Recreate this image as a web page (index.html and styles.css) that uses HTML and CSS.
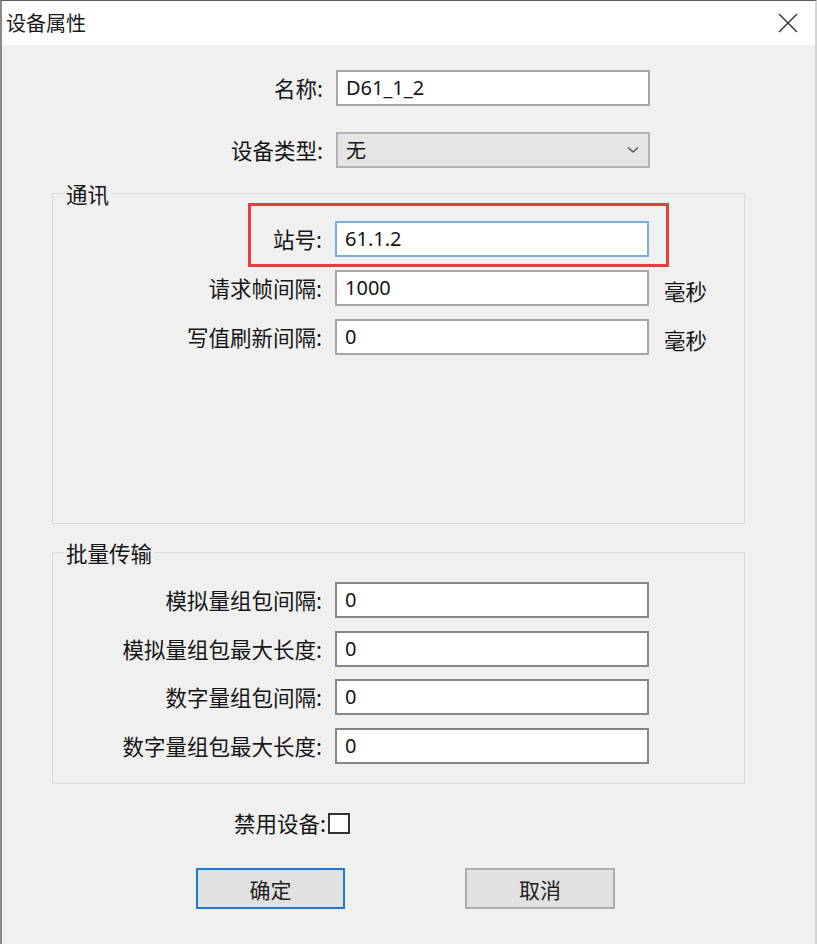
FILE: index.html
```html
<!DOCTYPE html>
<html lang="zh-CN">
<head>
<meta charset="utf-8">
<title>设备属性</title>
<link rel="stylesheet" href="styles.css">
</head>
<body>
<div class="dialog">
  <div class="titlebar">
    <span class="title">设备属性</span>
    <span class="close" aria-label="关闭">
      <svg width="20" height="20" viewBox="0 0 20 20"><path d="M1 1 L19 19 M19 1 L1 19" stroke="#3a3a3a" stroke-width="1.5" fill="none"/></svg>
    </span>
  </div>
  <div class="content">
    <div class="row top">
      <label class="lbl">名称:</label>
      <div class="input">D61_1_2</div>
    </div>
    <div class="row top row-select">
      <label class="lbl">设备类型:</label>
      <div class="select"><span>无</span>
        <svg class="chev" width="12" height="8" viewBox="0 0 12 8"><path d="M1 1.5 L6 6 L11 1.5" stroke="#555" stroke-width="1.6" fill="none"/></svg>
      </div>
    </div>

    <div class="group group-comm">
      <div class="group-title">通讯</div>
      <div class="row in-group first highlight">
        <label class="lbl">站号:</label>
        <div class="input focused">61.1.2</div>
        <span class="mark"></span>
      </div>
      <div class="row in-group">
        <label class="lbl">请求帧间隔:</label>
        <div class="input">1000</div>
        <span class="unit">毫秒</span>
      </div>
      <div class="row in-group">
        <label class="lbl">写值刷新间隔:</label>
        <div class="input">0</div>
        <span class="unit">毫秒</span>
      </div>
    </div>

    <div class="group group-batch">
      <div class="group-title">批量传输</div>
      <div class="row in-group first">
        <label class="lbl">模拟量组包间隔:</label>
        <div class="input dark">0</div>
      </div>
      <div class="row in-group">
        <label class="lbl">模拟量组包最大长度:</label>
        <div class="input dark">0</div>
      </div>
      <div class="row in-group">
        <label class="lbl">数字量组包间隔:</label>
        <div class="input dark">0</div>
      </div>
      <div class="row in-group">
        <label class="lbl">数字量组包最大长度:</label>
        <div class="input dark">0</div>
      </div>
    </div>

    <div class="check-row">
      <label class="lbl">禁用设备:</label>
      <span class="checkbox"></span>
    </div>

    <div class="buttons">
      <button class="btn default">确定</button>
      <button class="btn">取消</button>
    </div>
  </div>
</div>
</body>
</html>
```

FILE: styles.css
```css
* { box-sizing: border-box; }
html, body { margin: 0; padding: 0; }
body {
  width: 817px;
  height: 944px;
  overflow: hidden;
  background: #f0f0f0;
  font-family: "Noto Sans", "Noto Sans CJK SC", sans-serif;
  font-size: 21.5px;
  color: #141414;
}
.dialog {
  width: 817px;
  height: 944px;
  background: #f0f0f0;
  border-left: 2px solid #8a8a8a;
  border-right: 2px solid #d4d4d4;
  border-top: 1px solid #5c5c5c;
}
.titlebar {
  height: 44px;
  background: #fff;
  display: flex;
  align-items: center;
  justify-content: space-between;
  padding: 0 17px 0 4px;
}
.title {
  font-family: "Noto Sans CJK SC", sans-serif;
  font-size: 20px;
  color: #1a1a1a;
  line-height: 24px;
}
.close { display: flex; width: 20px; height: 20px; }

.content { padding-top: 25px; }

.row {
  display: grid;
  grid-template-columns: var(--lw) 314px auto;
  column-gap: 13px;
  align-items: center;
  position: relative;
}
.row.top { --lw: 321px; }
.row.in-group { --lw: 269px; margin-top: 13px; }
.row-select { margin-top: 26px; }

.lbl {
  text-align: right;
  font-family: "Noto Sans CJK SC", sans-serif;
  line-height: 24px;
  white-space: nowrap;
}
.input, .select {
  height: 36px;
  border: 2px solid #a6a6a6;
  background: #fff;
  padding: 0 8px;
  display: flex;
  align-items: center;
  font-size: 20px;
  line-height: 24px;
}
.input.focused { border-color: #78aee0; }
.input.dark { border-color: #868686; }
.select {
  background: #e5e5e5;
  border-color: #b3b3b3;
  justify-content: space-between;
  font-family: "Noto Sans CJK SC", sans-serif;
  padding-right: 9px;
}
.unit {
  margin-left: 2px;
  padding-top: 6px;
  font-family: "Noto Sans CJK SC", sans-serif;
  line-height: 24px;
}

.group {
  margin-left: 50px;
  width: 693px;
  border: 1px solid #dadada;
}
.group-comm { margin-top: 25px; height: 331px; }
.group-batch { margin-top: 28px; height: 232px; }
.group-title {
  display: block;
  width: max-content;
  height: 22px;
  margin: -11px 0 0 11px;
  padding: 0 2px;
  background: #f0f0f0;
  font-family: "Noto Sans CJK SC", sans-serif;
  line-height: 22px;
}
.group-comm .row.first { margin-top: 16px; }
.group-batch .row.in-group { margin-top: 12.5px; }
.group-batch .row.first { margin-top: 18px; }

.mark {
  position: absolute;
  left: 195px;
  top: -18px;
  width: 421px;
  height: 64px;
  border: 3px solid #e5403f;
  pointer-events: none;
}

.check-row {
  display: grid;
  grid-template-columns: 324px 22px;
  column-gap: 2px;
  align-items: center;
  margin-top: 27px;
}
.checkbox {
  width: 22px;
  height: 21px;
  background: #fff;
  border: 2px solid #333;
}

.buttons {
  display: flex;
  gap: 120px;
  margin: 33px 0 0 194px;
}
.btn {
  width: 150px;
  height: 41px;
  background: #e1e1e1;
  border: 2px solid #adadad;
  font-family: "Noto Sans CJK SC", sans-serif;
  font-size: 21px;
  color: #1e1e1e;
  padding: 0;
  line-height: 24px;
}
.btn.default { border-color: #1a7bd4; width: 149px; }
```
